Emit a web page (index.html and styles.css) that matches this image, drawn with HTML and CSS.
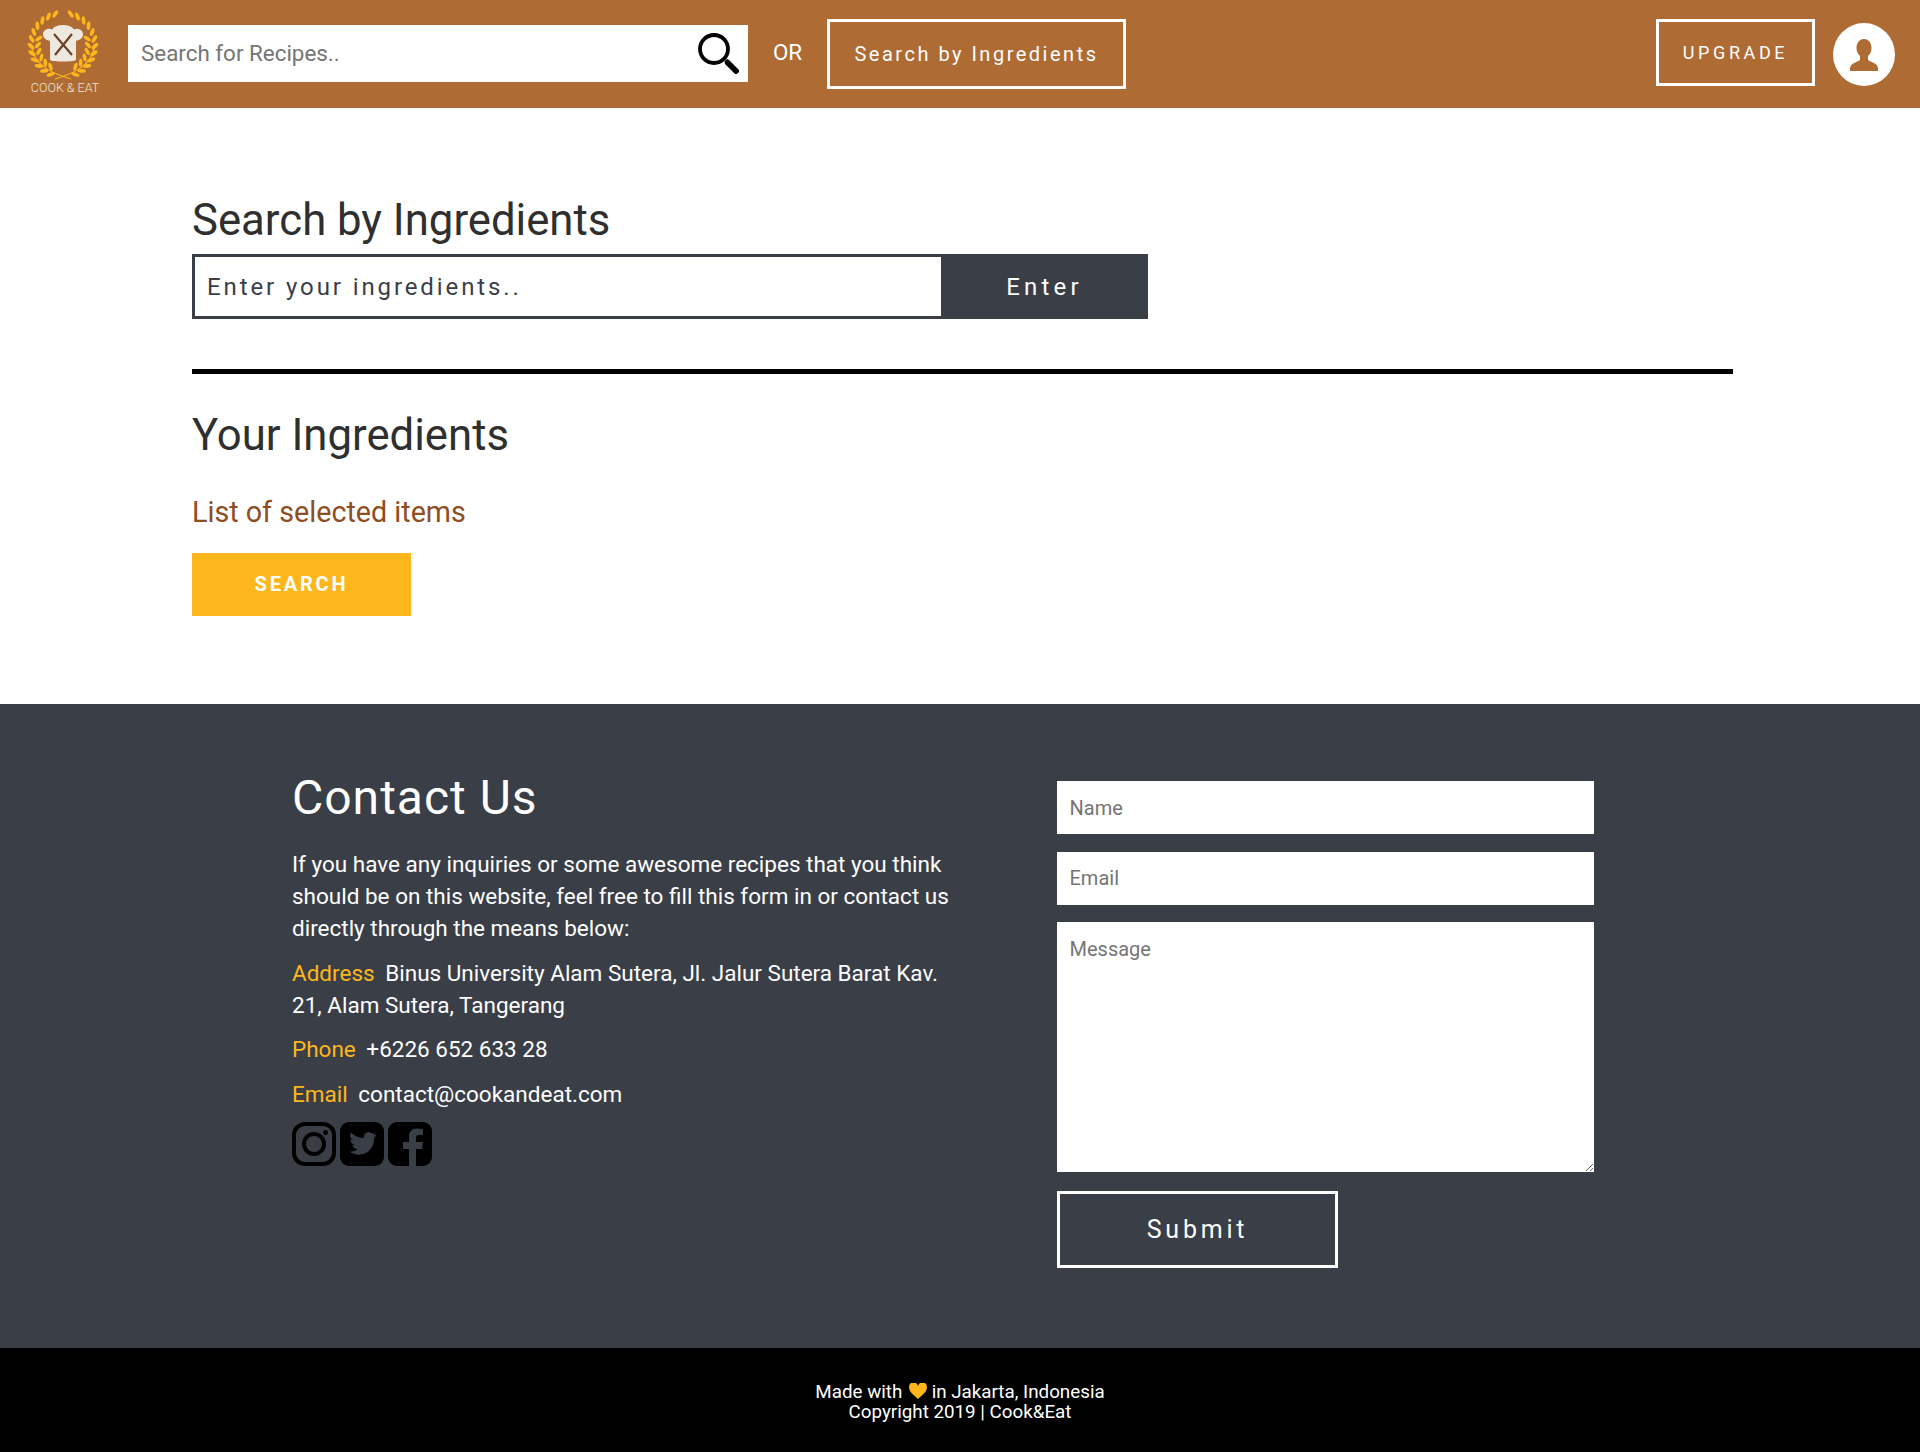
FILE: index.html
```html
<!DOCTYPE html>
<html lang="en">
<head>
    <meta charset="UTF-8">
    <title>Cook &amp; Eat</title>
    <link rel="stylesheet" href="styles.css">
</head>
<body>

    <header class="topbar">
        <div class="logo">
            <svg class="logo-mark" viewBox="0 0 74 68" width="74" height="68">
                <defs>
                    <g id="leaf-out"><ellipse cx="36" cy="2" rx="4.200" ry="1.900" transform="rotate(-42 36 2)"/></g>
                    <g id="leaf-in"><ellipse cx="36" cy="9" rx="4" ry="1.800" transform="rotate(42 36 9)"/></g>
                    <g id="wreath-side">
                        <use href="#leaf-out" transform="rotate(-14 36 34)"/>
                        <use href="#leaf-out" transform="rotate(-27 36 34)"/>
                        <use href="#leaf-out" transform="rotate(-40 36 34)"/>
                        <use href="#leaf-out" transform="rotate(-53 36 34)"/>
                        <use href="#leaf-out" transform="rotate(-66 36 34)"/>
                        <use href="#leaf-out" transform="rotate(-79 36 34)"/>
                        <use href="#leaf-out" transform="rotate(-92 36 34)"/>
                        <use href="#leaf-out" transform="rotate(-105 36 34)"/>
                        <use href="#leaf-out" transform="rotate(-118 36 34)"/>
                        <use href="#leaf-out" transform="rotate(-131 36 34)"/>
                        <use href="#leaf-out" transform="rotate(-144 36 34)"/>
                        <use href="#leaf-out" transform="rotate(-157 36 34)"/>
                        <use href="#leaf-in" transform="rotate(-75 36 34)"/>
                        <use href="#leaf-in" transform="rotate(-90 36 34)"/>
                        <use href="#leaf-in" transform="rotate(-105 36 34)"/>
                        <use href="#leaf-in" transform="rotate(-120 36 34)"/>
                        <use href="#leaf-in" transform="rotate(-135 36 34)"/>
                        <use href="#leaf-in" transform="rotate(-150 36 34)"/>
                        <path d="M5 38C8 52 20 61 44 68" fill="none" stroke="#fdb71c" stroke-width="1.200"/>
                    </g>
                </defs>
                <g fill="#fdb71c">
                    <use href="#wreath-side"/>
                    <use href="#wreath-side" transform="translate(72 0) scale(-1 1)"/>
                </g>
                <path d="M23 49V30c-4-1-7-3-7-6.500 0-4.500 5-7 9-5 2-3 5.500-4.500 11-4.500s9 1.500 11 4.500c4-2 9 .5 9 5 0 3.500-3 5.500-7 6.500v19c-3 2-23 2-26 0z" fill="#efe8de"/>
                <path d="M27 23l18 21M45 23L28 44" stroke="#6b4227" stroke-width="2.200" fill="none"/>
            </svg>
            <span class="logo-text">COOK &amp; EAT</span>
        </div>

        <form class="recipe-search">
            <input type="text" placeholder="Search for Recipes..">
            <svg class="search-icon" viewBox="0 0 44 44" width="44" height="44">
                <circle cx="17" cy="17" r="14" fill="none" stroke="#000" stroke-width="3.800"/>
                <path d="M27.500 29.500l2.500-2.500 2 1 9.500 9.500c2 2-2 6-4 4L28 32z" fill="#000"/>
            </svg>
        </form>

        <span class="or-label">OR</span>
        <a class="btn-ingredients" href="#">Search by Ingredients</a>

        <div class="topbar-right">
            <a class="btn-upgrade" href="#">UPGRADE</a>
            <a class="avatar" href="#">
                <svg viewBox="0 0 32 32" width="32" height="32">
                    <path d="M16 0c5 0 7.500 4.500 7.500 9 0 3.500-1.500 6.500-3.500 8v4c3 2.500 9 2.500 10 8v3H2v-3c1-5.500 7-5.500 10-8v-4c-2-1.500-3.500-4.500-3.500-8 0-4.500 2.500-9 7.500-9z" fill="#ae6b33"/>
                </svg>
            </a>
        </div>
    </header>

    <main class="content">
        <h1 class="title">Search by Ingredients</h1>
        <form class="ingredient-form">
            <input type="text" placeholder="Enter your ingredients..">
            <button type="button">Enter</button>
        </form>

        <hr class="divider">

        <h1 class="title your">Your Ingredients</h1>
        <p class="selected">List of selected items</p>
        <a class="btn-search" href="#">SEARCH</a>
    </main>

    <section class="contact">
        <div class="contact-info">
            <h2>Contact Us</h2>
            <p>If you have any inquiries or some awesome recipes that you think should be on this website, feel free to fill this form in or contact us directly through the means below:</p>
            <p><span class="key">Address</span> Binus University Alam Sutera, Jl. Jalur Sutera Barat Kav. 21, Alam Sutera, Tangerang</p>
            <p><span class="key">Phone</span> +6226 652 633 28</p>
            <p><span class="key">Email</span> contact@cookandeat.com</p>
            <div class="socials">
                <svg viewBox="0 0 44 44" width="44" height="44">
                    <rect x="2" y="2" width="40" height="40" rx="11" fill="none" stroke="#000" stroke-width="4"/>
                    <circle cx="22" cy="22" r="10" fill="none" stroke="#000" stroke-width="4"/>
                    <circle cx="33.500" cy="10.500" r="2.500" fill="#000"/>
                </svg>
                <svg viewBox="0 0 44 44" width="44" height="44">
                    <rect width="44" height="44" rx="9" fill="#000"/>
                    <path d="M36 12.500c-1 .5-2 .8-3 .9 1-.7 2-1.700 2.400-2.900-1 .6-2.200 1-3.400 1.300-2.700-3-8.900-1.200-8.200 4.300C19 16 14.500 14 11 10.500c-1.500 2.700-.7 6 1.800 7.700-.9 0-1.800-.3-2.500-.7 0 2.800 1.900 5 4.600 5.600-.8.200-1.700.2-2.500.1.700 2.300 2.800 3.900 5.200 3.900-2.700 2-5.300 2.700-8.300 2.500 8 5 15.500 3.500 20-1 3.500-3.500 5-8.500 4.700-12.700 1-.7 1.700-1.500 2-3.400z" fill="#3a3e47"/>
                </svg>
                <svg viewBox="0 0 44 44" width="44" height="44">
                    <path d="M9 0h26a9 9 0 0 1 9 9v26a9 9 0 0 1-9 9h-7V27h6l1-7h-7v-4c0-2 1-3 3-3h4V7c-2-.3-4-.5-6-.5-5 0-8 3-8 8.500v5h-6v7h6v17H9a9 9 0 0 1-9-9V9a9 9 0 0 1 9-9z" fill="#000"/>
                </svg>
            </div>
        </div>

        <form class="contact-form">
            <input type="text" placeholder="Name">
            <input type="text" placeholder="Email">
            <textarea placeholder="Message"></textarea>
            <button type="button">Submit</button>
        </form>
    </section>

    <footer class="bottom">
        <div>Made with <svg class="heart" viewBox="0 0 20 18" width="18" height="16"><path d="M10 18C4 12.500 0 9.500 0 5a5 5 0 0 1 10-1.500A5 5 0 0 1 20 5c0 4.500-4 7.500-10 13z" fill="#fdb71c"/></svg> in Jakarta, Indonesia</div>
        <div>Copyright 2019 | Cook&amp;Eat</div>
    </footer>

</body>
</html>
```

FILE: styles.css
```css
* {
    box-sizing: border-box;
}

body {
    margin: 0;
    font-family: Roboto, "Liberation Sans", sans-serif;
    background: #fff;
    color: #2f2f2f;
}

a {
    text-decoration: none;
}

/* top bar */
.topbar {
    height: 108px;
    background: #ae6b33;
    display: flex;
    align-items: center;
    padding: 0 25px 0 27px;
    color: #fff;
}

.logo {
    width: 74px;
    height: 88px;
    margin-top: 1px;
    display: flex;
    flex-direction: column;
    align-items: center;
}

.logo-mark {
    display: block;
    flex-shrink: 0;
    overflow: visible;
}

.logo-text {
    font-size: 12.500px;
    font-weight: 300;
    color: #efe3d6;
    white-space: nowrap;
    margin: 1px 0 0 2px;
}

.recipe-search {
    width: 620px;
    height: 57px;
    margin: 0 0 1px 27px;
    background: #fff;
    display: flex;
    align-items: center;
    padding-right: 7px;
}

.recipe-search input {
    flex: 1;
    height: 100%;
    border: none;
    outline: none;
    padding: 0 13px 2px;
    font: 22.400px Roboto, sans-serif;
    min-width: 0;
}

.recipe-search input::placeholder {
    color: #757575;
}

.or-label {
    width: 79px;
    text-align: center;
    font-size: 22.400px;
    margin-top: -4px;
}

.btn-ingredients {
    width: 299px;
    height: 70px;
    border: 3px solid #fff;
    color: #fff;
    font-size: 20px;
    letter-spacing: 2.500px;
    display: flex;
    align-items: center;
    justify-content: center;
}

.topbar-right {
    margin: 0 0 3px auto;
    display: flex;
    align-items: flex-end;
    gap: 18px;
}

.btn-upgrade {
    width: 159px;
    height: 67px;
    border: 3px solid #fff;
    color: #fff;
    font-size: 18px;
    letter-spacing: 3.600px;
    display: flex;
    align-items: center;
    justify-content: center;
}

.avatar {
    width: 62px;
    height: 63px;
    border-radius: 50%;
    background: #fff;
    display: flex;
    align-items: center;
    justify-content: center;
}

/* main */
.content {
    height: 596px;
    padding: 85px 187px 0 192px;
}

.title {
    margin: 0;
    font-size: 43.700px;
    font-weight: 400;
    line-height: 54px;
    color: #2f2f2f;
}

.ingredient-form {
    width: 956px;
    height: 65px;
    margin-top: 7px;
    display: flex;
}

.ingredient-form input {
    width: 749px;
    height: 100%;
    border: 3px solid #3a3e47;
    border-right: none;
    outline: none;
    padding: 0 12px;
    font: 24px Roboto, sans-serif;
    letter-spacing: 2.900px;
}

.ingredient-form input::placeholder {
    color: #3a3e47;
    opacity: 1;
}

.ingredient-form button {
    flex: 1;
    border: none;
    background: #3a3e47;
    color: #fff;
    font: 24px Roboto, sans-serif;
    letter-spacing: 4.200px;
}

.divider {
    margin: 50px 0 0;
    border: none;
    height: 5px;
    background: #000;
}

.title.your {
    margin-top: 34px;
}

.selected {
    margin: 32px 0 0;
    font-size: 28.700px;
    line-height: 36px;
    color: #8f4e1f;
}

.btn-search {
    width: 219px;
    height: 63px;
    margin-top: 23px;
    padding-bottom: 2px;
    background: #fdb71c;
    color: #fff;
    font-size: 20px;
    font-weight: 700;
    letter-spacing: 2.800px;
    display: flex;
    align-items: center;
    justify-content: center;
}

/* contact */
.contact {
    height: 644px;
    background: #3a3e47;
    color: #fff;
    display: flex;
    padding: 71px 0 0 292px;
}

.contact-info {
    width: 660px;
    margin-right: 105px;
    font-size: 22.500px;
    line-height: 32px;
}

.contact-info h2 {
    margin: 0 0 27px;
    font-size: 48px;
    font-weight: 400;
    line-height: 46px;
    letter-spacing: 1px;
}

.contact-info p {
    margin: 0 0 12.500px;
}

.key {
    color: #fdb71c;
    margin-right: 5px;
}

.socials {
    display: flex;
    gap: 4px;
    margin-top: 2px;
}

.contact-form {
    width: 537px;
    display: flex;
    flex-direction: column;
    margin-top: 6px;
}

.contact-form input,
.contact-form textarea {
    width: 100%;
    border: none;
    outline: none;
    padding: 0 12.500px;
    font: 20px Roboto, sans-serif;
    background: #fff;
}

.contact-form input {
    height: 53px;
    margin-bottom: 17.500px;
}

.contact-form textarea {
    height: 250px;
    padding-top: 15px;
    display: block;
}

.contact-form button {
    width: 281px;
    height: 77px;
    margin-top: 19px;
    background: transparent;
    border: 3px solid #fff;
    color: #fff;
    font: 25px Roboto, sans-serif;
    letter-spacing: 3.800px;
}

/* bottom */
.bottom {
    height: 104px;
    background: #000;
    color: #fff;
    font-size: 18.800px;
    line-height: 20px;
    text-align: center;
    padding-top: 34px;
}

.heart {
    vertical-align: -1px;
    margin-left: 2px;
}
```
